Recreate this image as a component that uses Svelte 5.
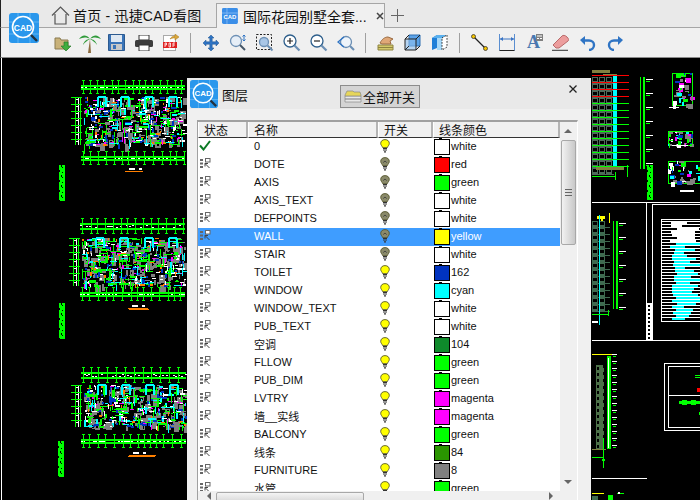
<script>
  const G = '#00ff00', W = '#ffffff', C = '#00ffff', A = '#808080', M = '#ff00ff', B = '#0033c0', O = '#ff7f00', R = '#ff0000', Y = '#ffff00', L = '#808040', K = '#000000';

  let seed = 12345;
  const rnd = () => {
    seed = (seed * 16807) % 2147483647;
    return seed / 2147483647;
  };
  const pick = (a) => a[Math.floor(rnd() * a.length)];
  const shapes = [];
  const r = (x, y, w, h, f) => shapes.push({ x, y, w, h, f });

  function band(x, y, w, h) {
    r(x, y + 2, w, 2, G);
    r(x, y + h - 2, w, 2, G);
    for (let i = x; i < x + w; i += 2 + Math.floor(rnd() * 3)) {
      if (rnd() < 0.7) r(i, y + 4 + Math.floor(rnd() * Math.max(1, h - 6)), 2, 1, W);
    }
    for (let i = x + 2; i < x + w; i += 6 + Math.floor(rnd() * 4)) {
      r(i, y - 2, 1, h + 5, G);
      r(i - 1, y - 3, 3, 1, G);
      r(i - 1, y + h + 3, 3, 1, G);
    }
  }
  function plan(x, y, w, h) {
    for (let i = 0; i < w * h / 45; i++) {
      r(x + rnd() * w | 0, y + rnd() * h | 0, 2 + rnd() * 5 | 0, 3 + rnd() * 6 | 0, A);
    }
    for (let i = 0; i < w * h / 40; i++) {
      r(x + rnd() * w | 0, y + rnd() * h | 0, 1 + rnd() * 2 | 0, 1 + rnd() * 3 | 0, K);
    }
    for (let i = 0; i < w * h / 11; i++) {
      const f = pick([G, G, G, W, W, W, C, C, G, B, B, M, O, A]);
      const hz = rnd() < 0.55;
      const l = 2 + rnd() * (f === G || f === C ? 9 : 4) | 0;
      const t = f === B || rnd() < 0.25 ? 2 : 1;
      r(x + rnd() * w | 0, y + rnd() * h | 0, hz ? l : t, hz ? t : l, f);
    }
    for (let i = 0; i < 4; i++) {
      const px = x + 14 + i * w / 4.200 | 0;
      r(px, y - 1, 8, 2, C);
      r(px - 1, y, 2, 10, C);
      r(px + 7, y, 2, 10, C);
    }
    const lx = x - 12;
    r(lx + 3, y, 1, h, G);
    r(lx + 6, y, 1, h, W);
    r(lx + 8, y, 1, h, G);
    for (let i = 0; i < h; i += 7) {
      r(lx - 1, y + i, 11, 1, G);
      r(lx + 4, y + i + 2, 2, 1, W);
    }
  }
  function bar(x, y, h) {
    r(x, y, 6, h, G);
    for (let i = 0; i < h; i += 5) {
      r(x + (i % 2 ? 0 : 2), y + i, 1, 2, K);
      r(x + 3, y + i + 2, 1, 1, K);
    }
  }
  function caption(x, y, w) {
    r(x, y, w, 1, O);
    r(x + 4, y - 3, 6, 2, W);
    r(x + 14, y - 3, 3, 2, W);
  }
  function elev(x, y, w, h, ox, color) {
    for (let j = 0; j < h; j += 7) {
      for (let i = 0; i < w - 4; i += 7) {
        r(x + i, y + j, 6, 6, color);
        r(x + i + 1, y + j + 1, 4, 3, K);
      }
      r(x, y + j + 6, w, 1, color);
    }
    r(ox, y, 1, h, G);
    r(ox + 3, y, 2, h, G);
    for (let j = 2; j < h; j += 14) {
      r(ox + 6, y + j, 7, 1, W);
      r(ox + 6, y + j + 2, 4, 1, G);
    }
  }

  // left drawing
  band(81, 83, 104, 7); plan(84, 97, 100, 48); band(81, 154, 104, 7); caption(125, 171, 18); bar(59, 165, 36);
  band(80, 221, 105, 9); plan(82, 238, 103, 48); band(80, 290, 105, 7); caption(128, 308, 20); bar(59, 303, 36);
  band(81, 370, 105, 9); plan(84, 385, 102, 42); band(81, 437, 105, 7); caption(129, 455, 27); bar(58, 441, 36);
  r(128, 456, 27, 1, O); r(129, 309, 20, 1, O);

  // right drawing: top elevation
  r(592, 70, 18, 3, L); r(603, 74, 14, 2, L);
  elev(592, 77, 22, 92, 640, '#4f6a5a');
  r(613, 76, 4, 92, C);
  for (let y = 75, i = 0; y < 170; y += 7, i++) r(592, y, 37, 1, i < 4 ? R : G);
  r(596, 167, 28, 3, L); r(592, 176, 24, 1, G); r(615, 172, 1, 8, G); r(627, 165, 1, 12, G);
  // small plans top right
  for (const [x, y, w, h] of [[672, 73, 20, 32], [668, 131, 24, 14], [668, 161, 32, 22]]) {
    r(x, y, w, 1, G); r(x, y + h, w, 1, G); r(x, y, 1, h, G); r(x + w, y, 1, h, G);
    for (let i = 0; i < 40; i++) {
      const f = pick([A, A, G, W, M, B, C]);
      r(x + rnd() * w | 0, y + rnd() * h | 0, 1 + rnd() * 5 | 0, 1 + rnd() * 5 | 0, f);
    }
  }
  r(669, 107, 10, 1, W); r(672, 145, 16, 1, W); r(680, 190, 14, 2, W);
  bar(647, 165, 35);
  // frames
  r(592, 202, 108, 1, W);
  r(646, 202, 1, 138, W);
  r(652, 204, 48, 1, W); r(652, 204, 1, 136, W);
  r(592, 340, 108, 1, W);
  r(646, 303, 6, 37, W);
  for (let y = 305; y < 338; y += 4) r(648, y, 2, 2, K);
  // table
  r(661, 219, 39, 103, W);
  r(662, 220, 38, 101, K);
  for (let y = 221; y < 320; y += 3) {
    r(662, y, 38, 1, W);
    r(670 + rnd() * 8 | 0, y + 1, 10 + rnd() * 20 | 0, 2, y > 240 ? C : W);
  }
  // lower elevation
  r(597, 216, 8, 3, Y); r(601, 217, 2, 8, Y); r(609, 213, 1, 10, Y);
  elev(592, 221, 18, 88, 613, '#3f6a50');
  r(599, 215, 1, 110, C);
  r(592, 314, 16, 1, G); r(608, 310, 1, 6, G);
  r(592, 321, 6, 2, W);
  // third elevation
  r(592, 354, 20, 1, Y);
  r(596, 365, 8, 85, '#4c7048');
  for (let y = 367; y < 448; y += 6) r(597, y, 2, 3, K);
  for (let y = 365; y < 448; y += 7) r(603, y, 1, 3, K);
  r(592, 449, 14, 1, L);
  r(607, 356, 4, 93, G); r(608, 358, 1, 90, W);
  for (let y = 354; y < 450; y += 7) { r(612, y, 5, 1, W); r(613, y + 2, 3, 1, G); }
  r(603, 438, 1, 30, G); r(592, 457, 12, 1, G); r(602, 459, 3, 2, G);
  r(592, 478, 55, 1, W);
  // lower right frames
  r(664, 363, 36, 1, W); r(664, 363, 1, 68, W); r(664, 430, 36, 1, W);
  r(668, 366, 32, 1, W); r(668, 366, 1, 61, W); r(668, 427, 32, 1, W); r(668, 395, 32, 1, W);
  r(695, 375, 5, 1, G); r(695, 377, 5, 1, G); r(697, 388, 3, 4, R);
  r(679, 401, 21, 3, G); r(682, 400, 5, 5, G); r(691, 400, 5, 5, G); r(699, 412, 1, 3, G);
  r(592, 493, 12, 1, Y); r(592, 496, 6, 4, '#3f6a50'); r(608, 495, 5, 5, G);
  r(617, 493, 7, 1, G); r(618, 492, 2, 2, W);

  const rows = [
    ['0', '#ffffff', 'white', 1, 1], ['DOTE', '#ff0000', 'red', 0, 0], ['AXIS', '#00ff00', 'green', 0, 0],
    ['AXIS_TEXT', '#ffffff', 'white', 0, 0], ['DEFPOINTS', '#ffffff', 'white', 0, 0], ['WALL', '#ffff00', 'yellow', 0, 0],
    ['STAIR', '#ffffff', 'white', 0, 0], ['TOILET', '#0033c0', '162', 0, 1], ['WINDOW', '#00ffff', 'cyan', 0, 1],
    ['WINDOW_TEXT', '#ffffff', 'white', 0, 1], ['PUB_TEXT', '#ffffff', 'white', 0, 1], ['空调', '#0e8a2b', '104', 0, 1],
    ['FLLOW', '#00ff00', 'green', 0, 1], ['PUB_DIM', '#00ff00', 'green', 0, 1], ['LVTRY', '#ff00ff', 'magenta', 0, 1],
    ['墙__实线', '#ff00ff', 'magenta', 0, 1], ['BALCONY', '#00ff00', 'green', 0, 1], ['线条', '#2a9500', '84', 0, 1],
    ['FURNITURE', '#808080', '8', 0, 1], ['水管', '#00ff00', 'green', 0, 1]
  ];
</script>

{#snippet logo(size)}
  <svg width={size} height={size} viewBox="0 0 30 30">
    <rect width="30" height="30" rx="3" fill="#2a97ec" />
    <path d="M0 9H30M0 21H30M9 0V30M21 0V30" stroke="#5fb4f3" stroke-width="1" />
    <circle cx="14" cy="14" r="10.5" fill="#2a97ec" stroke="#ffffff" stroke-width="1.6" />
    <path d="M22 22L28 28" stroke="#23303c" stroke-width="2.4" />
    <text x="14" y="17.5" text-anchor="middle" class="logotext">CAD</text>
  </svg>
{/snippet}

{#snippet bulb(on)}
  <svg width="10" height="14" viewBox="0 0 10 14">
    <path d="M5 .6C2.300.6.700 2.300.700 4.400c0 1.800 1.500 2.600 1.900 4.200h4.800c.4-1.600 1.900-2.400 1.900-4.200C9.300 2.300 7.700.6 5 .6Z" fill={on ? '#ffff00' : '#8a8a6a'} stroke="#57572e" stroke-width=".9" />
    {#if !on}<path d="M3.300 5.500 5 4l1.700 1.500" stroke="#333" fill="none" stroke-width=".8" />{/if}
    <path d="M3 9.500h4M3 11h4M4 12.800h2" stroke="#333" stroke-width="1.200" />
  </svg>
{/snippet}

{#snippet state()}
  <svg width="12" height="11" viewBox="0 0 12 11">
    <path d="M1 1h3v2H1zM1 4.500h3v2H1zM1 8h3v2H1z" fill="#666" />
    <rect x="6.500" y=".5" width="4.500" height="3.500" fill="#fff" stroke="#666" />
    <path d="M6 5.500l4.500 4.500M6 5.500v3M6 5.500h3" stroke="#444" fill="none" />
  </svg>
{/snippet}

<div class="app">
  <div class="tabs">
    <div class="tab home">
      <svg width="19" height="19" viewBox="0 0 19 19"><path d="M1 9.500 9.500 1 18 9.500M4 8V18H15V8" fill="none" stroke="#555" stroke-width="1.200" /></svg>
      <span class="hometitle">首页 - 迅捷CAD看图</span>
    </div>
    <div class="tab active">
      <svg width="16" height="16" viewBox="0 0 16 16"><rect width="16" height="16" rx="1.500" fill="#3b8ee8" /><path d="M0 5H16M5 0V16" stroke="#7db6f3" /><text x="8" y="11.500" text-anchor="middle" class="tabicon">CAD</text></svg>
      <span class="tabtitle">国际花园别墅全套...</span>
      <svg class="x" width="8" height="8" viewBox="0 0 8 8"><path d="M1 1l6 6M7 1L1 7" stroke="#444" stroke-width="1.500" /></svg>
    </div>
    <svg class="plus" width="13" height="13" viewBox="0 0 13 13"><path d="M6.500 0V13M0 6.500H13" stroke="#666" /></svg>
  </div>

  <div class="toolbar">
    <div class="ic"><svg width="18" height="18" viewBox="0 0 18 18"><path d="M1 4h5l1 2h7v9H1z" fill="#c9b27a" stroke="#8a7a50" /><path d="M10 8h4v4h3l-5 5-5-5h3z" fill="#3fae3f" stroke="#287a28" stroke-width=".7" /></svg></div>
    <div class="ic"><svg width="22" height="20" viewBox="0 0 22 20"><path d="M11 6l1 14h-3z" fill="#8c6b3f" /><path d="M11 6C7 1 3 2 0 6 4 4 8 4 11 6ZM11 6c4-5 8-4 11 0-4-2-8-2-11 0ZM11 6C8 6 5 8 4 12 6 9 8 8 11 6ZM11 6c3 0 6 2 7 6-2-3-4-4-7-6Z" fill="#2f9a3a" /></svg></div>
    <div class="ic"><svg width="17" height="17" viewBox="0 0 17 17"><path d="M.5.500h16v16H.5z" fill="#3a74b8" stroke="#2c5a90" /><rect x="3" y="1" width="11" height="7" fill="#dfe8f2" /><rect x="3" y="10" width="11" height="6" fill="#c8c8c8" /><rect x="5" y="11" width="3" height="4" fill="#3a74b8" /></svg></div>
    <div class="ic"><svg width="18" height="16" viewBox="0 0 18 16"><rect x="4" y="0" width="10" height="5" fill="#fff" stroke="#333" /><rect x="0" y="5" width="18" height="7" rx="1.500" fill="#3c3c3c" /><rect x="4" y="10" width="10" height="6" fill="#fff" stroke="#333" /></svg></div>
    <div class="ic"><svg width="16" height="17" viewBox="0 0 16 17"><rect x=".5" y="1.500" width="12" height="15" fill="#fff" stroke="#aaa" /><path d="M7 5C9 2 11 2 12 2V0l4 3-4 3V4C10 4 9 4 7 5Z" fill="#d9a63a" stroke="#a87a20" stroke-width=".5" /><rect x="0" y="8" width="14" height="6" fill="#e02020" /><path d="M2 13V9h1.500v2H2M6 9v4h1.500V9zM10 13V9h2M10 11h2" stroke="#fff" fill="none" stroke-width=".8" /></svg></div>
    <i class="sep"></i>
    <div class="ic"><svg width="16" height="16" viewBox="0 0 16 16"><path d="M8 0l3 3H9.200v3.800H13V5l3 3-3 3V9.200H9.200V13H11l-3 3-3-3h1.800V9.200H3V11L0 8l3-3v1.800h3.800V3H5Z" fill="#2f74c4" stroke="#1d528f" stroke-width=".5" /></svg></div>
    <div class="ic"><svg width="18" height="18" viewBox="0 0 18 18"><circle cx="7" cy="7" r="5.500" fill="#e6eef7" stroke="#6c8fb4" stroke-width="1.300" /><path d="M11 11l5 5" stroke="#456" stroke-width="2" /><path d="M15 1v6M13.500 2.500 15 1l1.500 1.500M13.500 5.500 15 7l1.500-1.500" stroke="#2f74c4" fill="none" /></svg></div>
    <div class="ic"><svg width="18" height="18" viewBox="0 0 18 18"><rect x=".5" y=".5" width="15" height="15" fill="none" stroke="#222" stroke-dasharray="2 1.500" /><circle cx="8" cy="8" r="4.500" fill="#a9c6e6" stroke="#6c8fb4" stroke-width="1.300" /><path d="M11.500 11.500l5 5" stroke="#6c8fb4" stroke-width="2" /></svg></div>
    <div class="ic"><svg width="18" height="18" viewBox="0 0 18 18"><circle cx="7" cy="7" r="6" fill="#fff" stroke="#2e5f8c" stroke-width="1.300" /><path d="M11.500 11.500l5 5" stroke="#6c8fb4" stroke-width="2.200" /><path d="M4 7h6M7 4v6" stroke="#222" stroke-width="1.200" /></svg></div>
    <div class="ic"><svg width="18" height="18" viewBox="0 0 18 18"><circle cx="7" cy="7" r="6" fill="#fff" stroke="#2e5f8c" stroke-width="1.300" /><path d="M11.500 11.500l5 5" stroke="#6c8fb4" stroke-width="2.200" /><path d="M4 7h6" stroke="#222" stroke-width="1.200" /></svg></div>
    <div class="ic"><svg width="18" height="18" viewBox="0 0 18 18"><circle cx="9" cy="8" r="5.500" fill="#eef4fa" stroke="#6c8fb4" stroke-width="1.300" /><path d="M13 12l4 4" stroke="#6c8fb4" stroke-width="2.200" /><path d="M7 3L1 8l6 5" stroke="#2f74c4" fill="none" stroke-width="1.300" /></svg></div>
    <i class="sep"></i>
    <div class="ic"><svg width="18" height="18" viewBox="0 0 18 18"><path d="M1 11h15v5H1z" fill="#d3c86a" stroke="#8e8440" /><path d="M1 13.500h15" stroke="#8e8440" /><path d="M3 9c2-4 5-6 8-6l5 2-3 2 1 3H5z" fill="#e0a878" stroke="#9a6a40" /></svg></div>
    <div class="ic"><svg width="17" height="17" viewBox="0 0 17 17"><path d="M5 1h11v11H5z" fill="#5aa2e8" stroke="#2f6fb0" /><path d="M1 5h11v11H1z" fill="#8fc0ef" fill-opacity=".6" stroke="#222" /><path d="M1 5l4-4M12 5l4-4M12 16l4-4M1 16l4-4" stroke="#222" /></svg></div>
    <div class="ic"><svg width="17" height="17" viewBox="0 0 17 17"><path d="M1 4l5-3v13l-5 2z" fill="#1f7fd8" /><path d="M1 4l5-3h10L11 4z" fill="#5ab0ee" /><path d="M6 4h5v12H6z" fill="#a6d8f8" /><path d="M11 4l5-3v12l-5 3z" fill="#fff" stroke="#222" stroke-dasharray="1.500 1.500" /></svg></div>
    <i class="sep"></i>
    <div class="ic"><svg width="17" height="17" viewBox="0 0 17 17"><path d="M2.500 2.500l12 12" stroke="#222" stroke-width="1.200" /><circle cx="2.500" cy="2.500" r="2" fill="#f4c400" stroke="#222" stroke-width=".7" /><circle cx="14.500" cy="14.500" r="2" fill="#f4c400" stroke="#222" stroke-width=".7" /></svg></div>
    <div class="ic"><svg width="16" height="17" viewBox="0 0 16 17"><path d="M.5 0V16.500M15.500 0V16.500" stroke="#5a8ed0" /><path d="M.5 16.500h15" stroke="#222" /><path d="M1 5h14" stroke="#3a74c4" /><path d="M1 5l3-2v4zM15 5l-3-2v4z" fill="#3a74c4" /></svg></div>
    <div class="ic"><span class="a">A</span><svg class="amini" width="7" height="7" viewBox="0 0 7 7"><rect width="7" height="7" fill="#808080" /><path d="M1 2h5M1 4.500h2M4 4.500h2" stroke="#fff" /></svg></div>
    <div class="ic"><svg width="17" height="17" viewBox="0 0 17 17"><path d="M1 11 10 2c1-1 3-1 5 1s2 3 1 4l-9 7H4z" fill="#ec9d9d" stroke="#b86a6a" /><path d="M0 16.500h16" stroke="#555" stroke-width="1.500" /></svg></div>
    <div class="ic"><svg width="16" height="16" viewBox="0 0 16 16"><path d="M4 5.500h5c3 0 5 2 5 4.500s-2 5-5 5" fill="none" stroke="#2f74c4" stroke-width="2.400" /><path d="M0 5l5-4v9z" fill="#2f74c4" /></svg></div>
    <div class="ic"><svg width="16" height="16" viewBox="0 0 16 16"><path d="M12 5.500H7c-3 0-5 2-5 4.500s2 5 5 5" fill="none" stroke="#2f74c4" stroke-width="2.400" /><path d="M16 5l-5-4v9z" fill="#2f74c4" /></svg></div>
  </div>

  <div class="canvas">
    <svg class="drawing" width="700" height="442" viewBox="0 58 700 442" shape-rendering="crispEdges">
      {#each shapes as s}
        <rect x={s.x} y={s.y} width={s.w} height={s.h} fill={s.f} />
      {/each}
    </svg>
  </div>

  <div class="applogo">{@render logo(30)}</div>

  <div class="dialog">
    <div class="dhead">
      <span class="dlogo">{@render logo(28)}</span>
      <span class="dtitle">图层</span>
      <button class="allbtn">
        <svg width="18" height="13" viewBox="0 0 18 13"><path d="M1 9h16v3H1zM1 6h16v3H1z" fill="#e8e8e8" stroke="#888" stroke-width=".7" /><path d="M1 5 3 1h6l1 1h6l1 3v1H1z" fill="#e6d65a" stroke="#888" stroke-width=".7" /></svg>
        全部开关
      </button>
      <svg class="dclose" width="8" height="8" viewBox="0 0 8 8"><path d="M.5.500l7 7M7.500.500l-7 7" stroke="#222" stroke-width="1.300" /></svg>
    </div>
    <div class="frame">
      <div class="list">
        <div class="thead">
          <div class="th c1">状态</div>
          <div class="th c2">名称</div>
          <div class="th c3">开关</div>
          <div class="th c4">线条颜色</div>
        </div>
        <div class="rows">
          {#each rows as row, i}
            <div class="row" class:sel={i === 5}>
              <div class="c1 cell icon">
                {#if row[3]}
                  <svg width="12" height="11" viewBox="0 0 12 11"><path d="M1 5.500l3.500 4L11 1" fill="none" stroke="#0b7a25" stroke-width="2" /></svg>
                {:else}
                  {@render state()}
                {/if}
              </div>
              <div class="c2 cell name">{row[0]}</div>
              <div class="c3 cell bulb">{@render bulb(row[4])}</div>
              <div class="c4 cell">
                <span class="swatch" style:background={row[1]}></span>
                <span class="cname">{row[2]}</span>
              </div>
            </div>
          {/each}
        </div>
        <div class="hscroll">
          <i class="arr left"></i>
          <div class="hthumb"><b></b></div>
          <i class="arr right"></i>
        </div>
      </div>
      <div class="vscroll">
        <i class="arr up"></i>
        <div class="vthumb"><b></b></div>
        <i class="arr down"></i>
      </div>
    </div>
  </div>
</div>

<style>
  :global(body) { margin: 0; }
  .app {
    position: relative;
    width: 700px;
    height: 500px;
    overflow: hidden;
    display: flex;
    flex-direction: column;
    background: #000;
    font-family: "Liberation Sans", "Noto Sans CJK SC", sans-serif;
    color: #111;
  }
  .logotext { font: 700 8.500px "Liberation Sans", sans-serif; fill: #fff; }
  .tabicon { font: 700 6px "Liberation Sans", sans-serif; fill: #fff; }

  .tabs {
    height: 27px;
    flex: none;
    display: flex;
    align-items: flex-end;
    background: #e9e9e9;
    border-bottom: 1px solid #a6a6a6;
    border-left: 1px solid #222;
    padding-left: 50px;
  }
  .tab { display: flex; align-items: center; font-size: 14px; height: 24px; }
  .home { gap: 3px; width: 165px; }
  .hometitle { letter-spacing: .2px; white-space: nowrap; }
  .active {
    width: 169px;
    box-sizing: border-box;
    height: 25px;
    margin-bottom: -1px;
    background: #f0f0f0;
    border: 1px solid #a6a6a6;
    border-bottom: none;
    padding-left: 5px;
    gap: 5px;
  }
  .tabtitle { width: 128px; white-space: nowrap; overflow: hidden; }
  .x { flex: none; margin-left: 1px; }
  .plus { margin: 0 0 5px 6px; }

  .toolbar {
    height: 29px;
    flex: none;
    display: flex;
    align-items: center;
    background: #f0f0f0;
    border-left: 1px solid #222;
    border-bottom: 1px solid #8a8a8a;
    padding-left: 48px;
  }
  .ic {
    position: relative;
    width: 27px;
    height: 24px;
    flex: none;
    display: flex;
    align-items: center;
    justify-content: center;
  }
  .sep { width: 1px; height: 20px; margin: 0 6px; background: #a0a0a0; flex: none; }
  .a { font: 700 18px "Liberation Serif", serif; color: #4a78b0; }
  .amini { position: absolute; top: 3px; right: 4px; }

  .canvas { flex: 1; min-height: 0; background: #000; position: relative; border-left: 1px solid #000; }
  .canvas::before { content: ""; position: absolute; left: 0; top: 0; bottom: 0; width: 1px; background: #fff; }
  .drawing { display: block; margin-left: -1px; }

  .applogo { position: absolute; left: 9px; top: 13px; line-height: 0; }

  .dialog {
    position: absolute;
    left: 187px;
    top: 78px;
    width: 404px;
    height: 422px;
    background: #f0f0f0;
    overflow: hidden;
  }
  .dhead {
    position: relative;
    height: 31px;
    background: #e9e9e9;
    display: flex;
    align-items: center;
    padding-left: 3px;
  }
  .dlogo { line-height: 0; }
  .dtitle { font-size: 13px; margin: 2px 0 0 4px; }
  .allbtn {
    margin: 6px 0 0 92px;
    width: 80px;
    height: 23px;
    padding: 0 0 0 3px;
    display: flex;
    align-items: center;
    gap: 1px;
    font: 13px "Liberation Sans", "Noto Sans CJK SC", sans-serif;
    color: #111;
    background: #d4d4d4;
    border: 1px solid #8c8c8c;
  }
  .dclose { position: absolute; right: 14px; top: 7px; }

  .frame {
    margin: 11px 0 0 10px;
    width: 381px;
    display: flex;
    border-top: 2px solid #a0a0a0;
    border-left: 1px solid #a0a0a0;
    border-right: 1px solid #fff;
    height: 380px;
    box-sizing: border-box;
  }
  .list { width: 363px; display: flex; flex-direction: column; min-height: 0; position: relative; }
  .thead { height: 16px; flex: none; display: flex; background: #f0f0f0; }
  .th {
    box-sizing: border-box;
    font-size: 12px;
    line-height: 18px;
    padding-left: 5px;
    border-right: 2px solid #b4b4b4;
    border-left: 1px solid #fff;
    border-bottom: 1px solid #333;
    overflow: hidden;
  }
  .c1 { width: 50px; flex: none; }
  .c2 { width: 130px; flex: none; }
  .c3 { width: 55px; flex: none; }
  .c4 { flex: 1; }
  .rows { flex: 1; min-height: 0; overflow: hidden; background: #fff; }
  .row { height: 18px; display: flex; font-size: 11px; }
  .cell { display: flex; align-items: center; box-sizing: border-box; }
  .row .icon { padding: 0 0 3px 1px; }
  .name { padding: 0 0 2px 6px; white-space: nowrap; }
  .bulb { padding: 0 0 3px 2px; }
  .sel { background: #3f9dff; color: #fff; }
  .swatch {
    position: relative;
    width: 14px;
    height: 14px;
    border: 1px solid #000;
    margin: -1px 1px 0 1px;
    flex: none;
  }
  .swatch::before {
    content: "";
    position: absolute;
    left: 4px;
    top: -2px;
    width: 3px;
    height: 1px;
    background: #000;
  }
  .cname { margin-top: -3px; }
  .hscroll {
    height: 9px;
    flex: none;
    background: #f0f0f0;
    position: relative;
  }
  .hthumb {
    position: absolute;
    left: 18px;
    top: 1px;
    width: 148px;
    height: 12px;
    box-sizing: border-box;
    background: linear-gradient(#f4f4f4, #d4d4d4);
    border: 1px solid #a8a8a8;
    border-radius: 2px;
    text-align: center;
  }
  .hthumb b {
    display: inline-block;
    width: 7px;
    height: 6px;
    margin-top: 1px;
    background: repeating-linear-gradient(90deg, #666 0 1px, transparent 1px 3px);
  }
  .vscroll {
    width: 17px;
    flex: none;
    position: relative;
    background: #f0f0f0;
  }
  .vthumb {
    position: absolute;
    left: 1px;
    top: 18px;
    width: 15px;
    height: 105px;
    box-sizing: border-box;
    background: linear-gradient(90deg, #f2f2f2, #c8c8c8);
    border: 1px solid #a8a8a8;
    border-radius: 2px;
    display: flex;
    justify-content: center;
  }
  .vthumb b {
    display: block;
    width: 7px;
    height: 8px;
    margin-top: 48px;
    background: repeating-linear-gradient(#666 0 1px, transparent 1px 3px);
  }
  .arr { position: absolute; width: 0; height: 0; border: 4px solid transparent; }
  .up { left: 4px; top: 3px; border-bottom: 4px solid #666; }
  .down { left: 4px; top: 358px; border-top: 4px solid #666; }
  .left { left: 5px; top: 1px; border-right: 4px solid #666; }
  .right { left: 351px; top: 1px; border-left: 4px solid #666; }
</style>
